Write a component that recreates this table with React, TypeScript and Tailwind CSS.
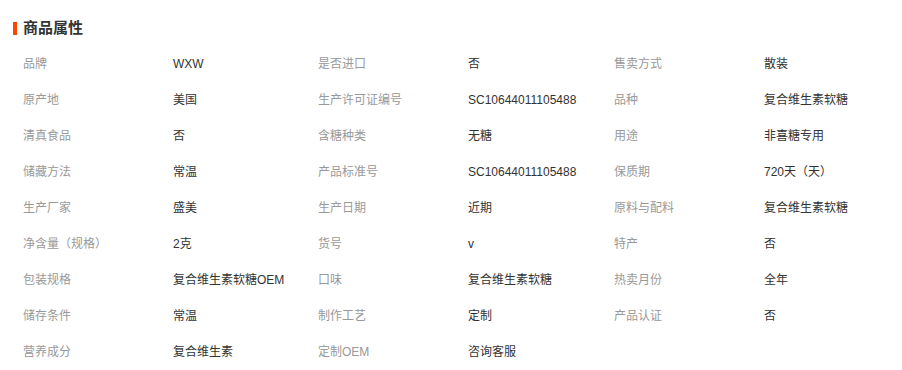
import React from 'react';

const rows: [string, string, string, string, string, string][] = [
  ['品牌', 'WXW', '是否进口', '否', '售卖方式', '散装'],
  ['原产地', '美国', '生产许可证编号', 'SC10644011105488', '品种', '复合维生素软糖'],
  ['清真食品', '否', '含糖种类', '无糖', '用途', '非喜糖专用'],
  ['储藏方法', '常温', '产品标准号', 'SC10644011105488', '保质期', '720天（天）'],
  ['生产厂家', '盛美', '生产日期', '近期', '原料与配料', '复合维生素软糖'],
  ['净含量（规格）', '2克', '货号', 'v', '特产', '否'],
  ['包装规格', '复合维生素软糖OEM', '口味', '复合维生素软糖', '热卖月份', '全年'],
  ['储存条件', '常温', '制作工艺', '定制', '产品认证', '否'],
  ['营养成分', '复合维生素', '定制OEM', '咨询客服', '', ''],
];

export default function App() {
  return (
    <div
      className="w-[902px] h-[370px] bg-white pt-[18px] overflow-hidden"
      style={{ fontFamily: '"Liberation Sans", "Noto Sans CJK SC", sans-serif' }}
    >
      {/* Section title */}
      <div className="flex items-center h-5 pl-[13px]">
        <span className="w-1 h-[13px] bg-[#ff4400]" />
        <h2 className="ml-[6px] text-[15px] font-bold text-[#333] leading-5">商品属性</h2>
      </div>

      {/* Attribute table */}
      <div className="mt-[8px] pl-[23px] grid grid-cols-[150px_145px_150px_146px_150px_1fr] text-[12px]">
        {rows.map((r, i) => (
          <React.Fragment key={i}>
            {r.map((cell, j) => (
              <div
                key={j}
                className={`h-9 flex items-center whitespace-nowrap ${
                  j % 2 === 0 ? 'text-[#999]' : 'text-[#333]'
                }`}
              >
                {cell}
              </div>
            ))}
          </React.Fragment>
        ))}
      </div>
    </div>
  );
}
